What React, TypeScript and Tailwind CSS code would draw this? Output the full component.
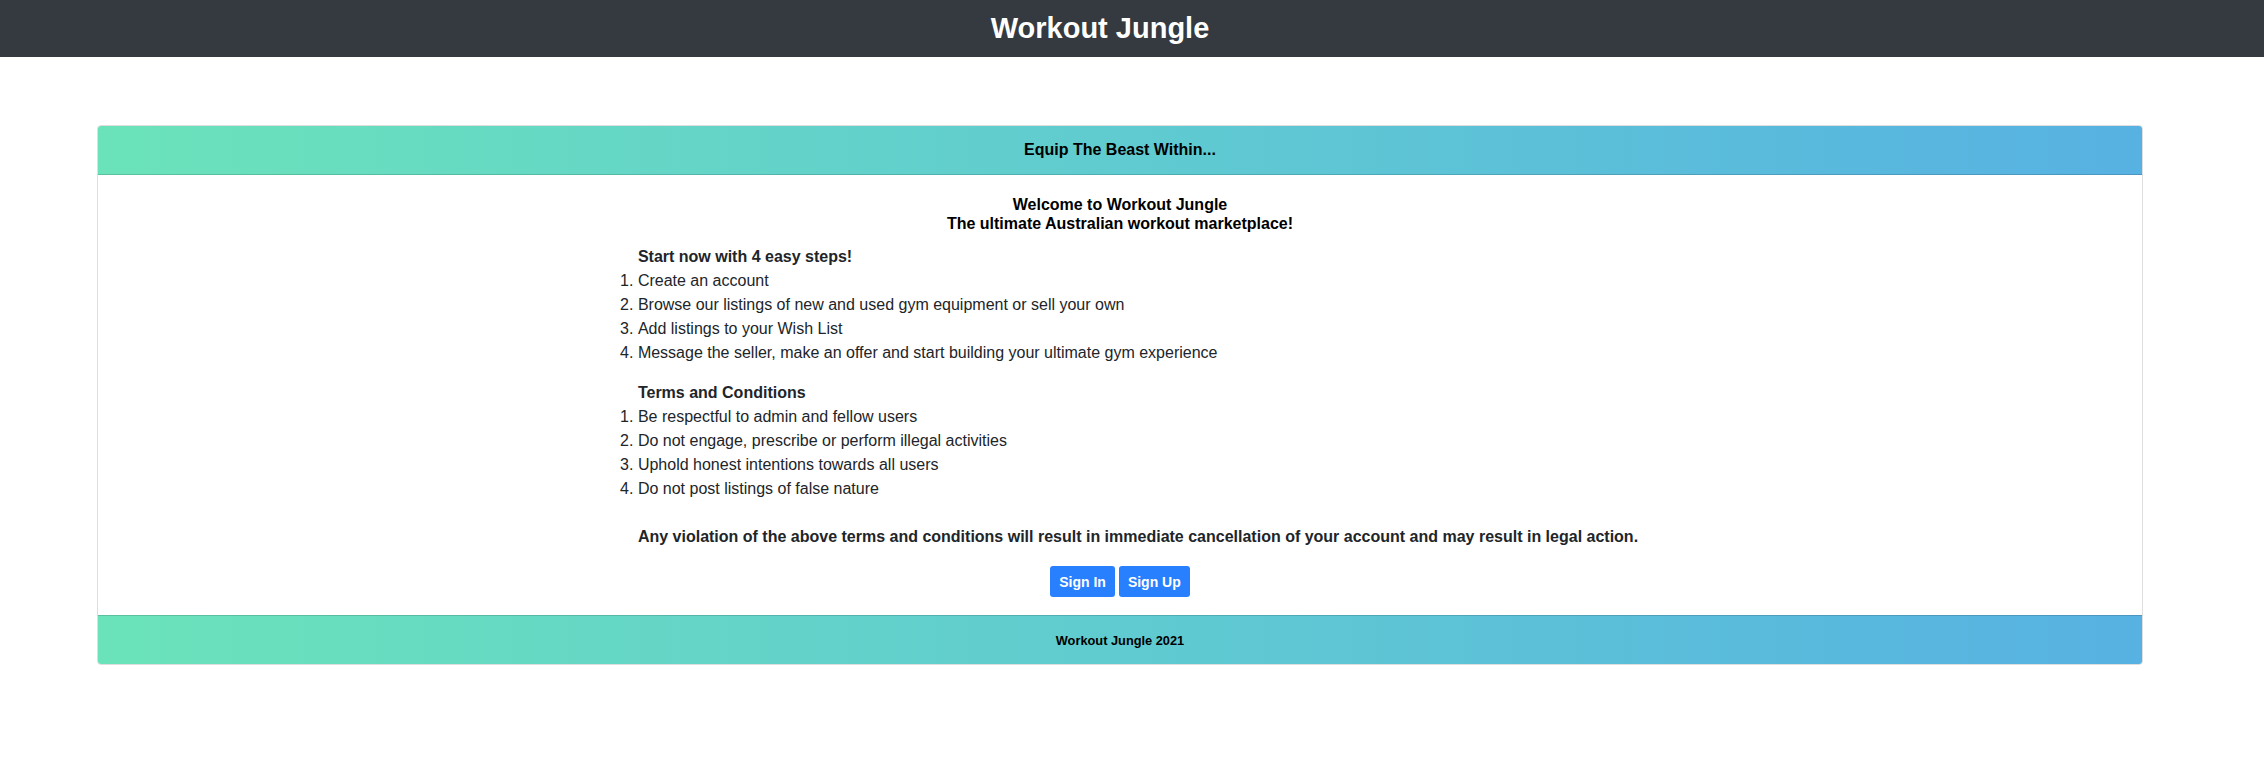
const steps = [
  "Create an account",
  "Browse our listings of new and used gym equipment or sell your own",
  "Add listings to your Wish List",
  "Message the seller, make an offer and start building your ultimate gym experience",
];

const terms = [
  "Be respectful to admin and fellow users",
  "Do not engage, prescribe or perform illegal activities",
  "Uphold honest intentions towards all users",
  "Do not post listings of false nature",
];

const gradient = "bg-gradient-to-r from-[#6be3b9] via-[#60cbd0] to-[#57b1e2]";

const App = () => {
  return (
    <div className="min-h-screen bg-white font-['Liberation_Sans',Arial,sans-serif] text-[#212529]">
      {/* Navbar */}
      <nav className="h-[57px] bg-[#343a40] flex items-center justify-center pr-[64px]">
        <h1 className="text-[29px] font-bold text-white leading-none">Workout Jungle</h1>
      </nav>

      <main className="pl-[97px] pr-[121px] pt-[68px]">
        <div className="border border-[#dedede] rounded-[4px] overflow-hidden">
          {/* Card header */}
          <div className={`h-[49px] flex items-center justify-center border-b border-black/15 ${gradient}`}>
            <h2 className="text-base font-bold text-black">Equip The Beast Within...</h2>
          </div>

          {/* Card body */}
          <div className="pt-5 pb-[18px] flex flex-col items-center">
            <h3 className="text-center text-base font-bold text-black leading-[1.2]">
              Welcome to Workout Jungle
              <br />
              The ultimate Australian workout marketplace!
            </h3>

            <div className="mt-3 text-left text-base leading-6 pl-[36px]">
              <h4 className="font-bold">Start now with 4 easy steps!</h4>
              <ol className="list-decimal mb-4">
                {steps.map((s) => (
                  <li key={s}>{s}</li>
                ))}
              </ol>

              <h4 className="font-bold">Terms and Conditions</h4>
              <ol className="list-decimal">
                {terms.map((t) => (
                  <li key={t}>{t}</li>
                ))}
              </ol>

              <p className="mt-6 font-bold">
                Any violation of the above terms and conditions will result in immediate cancellation of your account and may result in legal action.
              </p>
            </div>

            <div className="mt-[17px] flex gap-1">
              <button className="h-[31px] px-[9px] rounded-[3px] bg-[#2880ff] text-white text-sm font-bold">Sign In</button>
              <button className="h-[31px] px-[9px] rounded-[3px] bg-[#2880ff] text-white text-sm font-bold">Sign Up</button>
            </div>
          </div>

          {/* Card footer */}
          <div className={`h-[49px] flex items-center justify-center border-t border-black/15 ${gradient}`}>
            <span className="text-[12.8px] font-bold text-black">Workout Jungle 2021</span>
          </div>
        </div>
      </main>
    </div>
  );
};

export default App;
